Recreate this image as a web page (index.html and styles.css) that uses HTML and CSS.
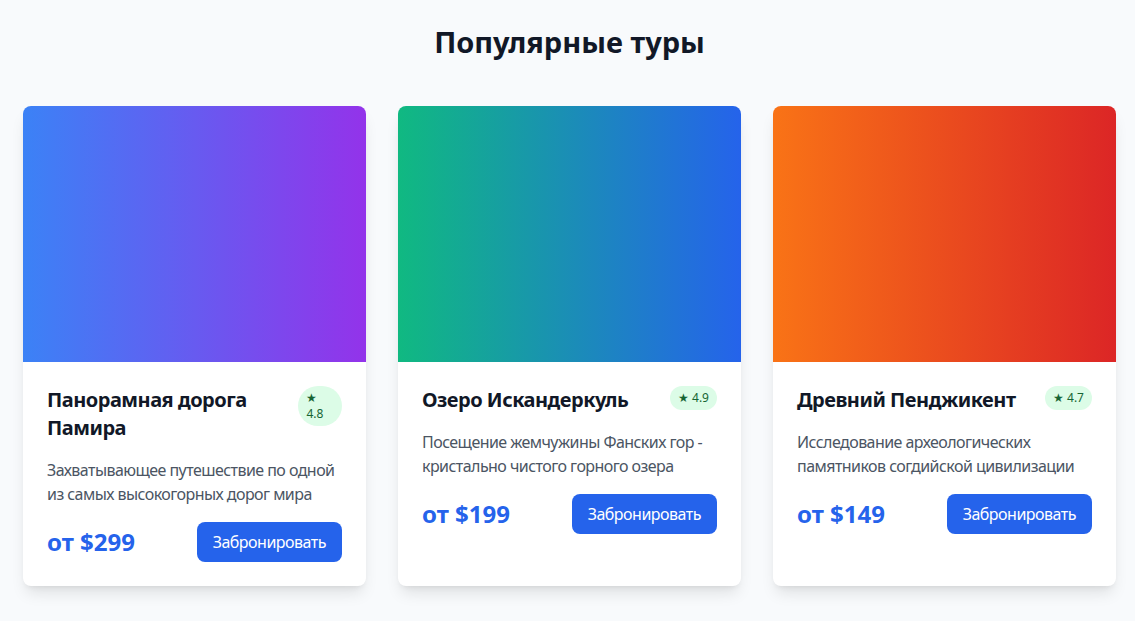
FILE: index.html
```html
<!DOCTYPE html>
<html lang="ru">
<head>
<meta charset="utf-8">
<title>Популярные туры</title>
<link rel="stylesheet" href="styles.css">
</head>
<body>
<section class="tours">
  <h2 class="tours-title">Популярные туры</h2>
  <div class="tours-grid">
    <article class="card">
      <div class="card-image grad-blue"></div>
      <div class="card-body">
        <div class="card-head">
          <h3 class="card-title">Панорамная дорога Памира</h3>
          <span class="badge">★ 4.8</span>
        </div>
        <p class="card-desc">Захватывающее путешествие по одной из самых высокогорных дорог мира</p>
        <div class="card-foot">
          <span class="price">от $299</span>
          <button class="btn">Забронировать</button>
        </div>
      </div>
    </article>
    <article class="card">
      <div class="card-image grad-green"></div>
      <div class="card-body">
        <div class="card-head">
          <h3 class="card-title">Озеро Искандеркуль</h3>
          <span class="badge">★ 4.9</span>
        </div>
        <p class="card-desc">Посещение жемчужины Фанских гор - кристально чистого горного озера</p>
        <div class="card-foot">
          <span class="price">от $199</span>
          <button class="btn">Забронировать</button>
        </div>
      </div>
    </article>
    <article class="card">
      <div class="card-image grad-orange"></div>
      <div class="card-body">
        <div class="card-head">
          <h3 class="card-title">Древний Пенджикент</h3>
          <span class="badge">★ 4.7</span>
        </div>
        <p class="card-desc">Исследование археологических памятников согдийской цивилизации</p>
        <div class="card-foot">
          <span class="price">от $149</span>
          <button class="btn">Забронировать</button>
        </div>
      </div>
    </article>
  </div>
</section>
</body>
</html>
```

FILE: styles.css
```css
* { box-sizing: border-box; }
html, body { margin: 0; padding: 0; }
body {
  background: #f8fafc;
  font-family: "Noto Sans", "Open Sans", sans-serif;
  color: #111827;
}
.tours {
  padding: 24px 19px 40px 23px;
}
.tours-title {
  margin: 0 0 46px;
  text-align: center;
  font-size: 29px;
  line-height: 36px;
  font-weight: 700;
  color: #111827;
}
.tours-grid {
  display: grid;
  grid-template-columns: repeat(3, 1fr);
  gap: 32px;
}
.card {
  background: #fff;
  border-radius: 8px;
  overflow: hidden;
  box-shadow: 0 10px 15px -3px rgba(0,0,0,.1), 0 4px 6px -4px rgba(0,0,0,.1);
}
.card-image { height: 256px; }
.grad-blue { background: linear-gradient(to right, #3b82f6, #9333ea); }
.grad-green { background: linear-gradient(to right, #10b981, #2563eb); }
.grad-orange { background: linear-gradient(to right, #f97316, #dc2626); }
.card-body { padding: 24px; }
.card-head {
  display: flex;
  justify-content: space-between;
  align-items: flex-start;
  margin-bottom: 16px;
}
.card-title {
  margin: 0;
  font-size: 20px;
  line-height: 28px;
  font-weight: 700;
  letter-spacing: -0.5px;
  color: #111827;
}
.badge {
  background: #dcfce7;
  color: #166534;
  font-size: 12px;
  line-height: 16px;
  padding: 4px 8px;
  border-radius: 9999px;
}
.card-desc {
  margin: 0 0 16px;
  font-size: 16px;
  line-height: 24px;
  letter-spacing: -0.55px;
  color: #4b5563;
}
.card-foot {
  display: flex;
  justify-content: space-between;
  align-items: center;
}
.price {
  font-size: 24px;
  line-height: 32px;
  font-weight: 700;
  color: #2563eb;
}
.btn {
  background: #2563eb;
  color: #fff;
  border: 0;
  border-radius: 8px;
  padding: 8px 16px;
  font-family: inherit;
  font-size: 16px;
  line-height: 24px;
  letter-spacing: -0.5px;
  cursor: pointer;
}
```
